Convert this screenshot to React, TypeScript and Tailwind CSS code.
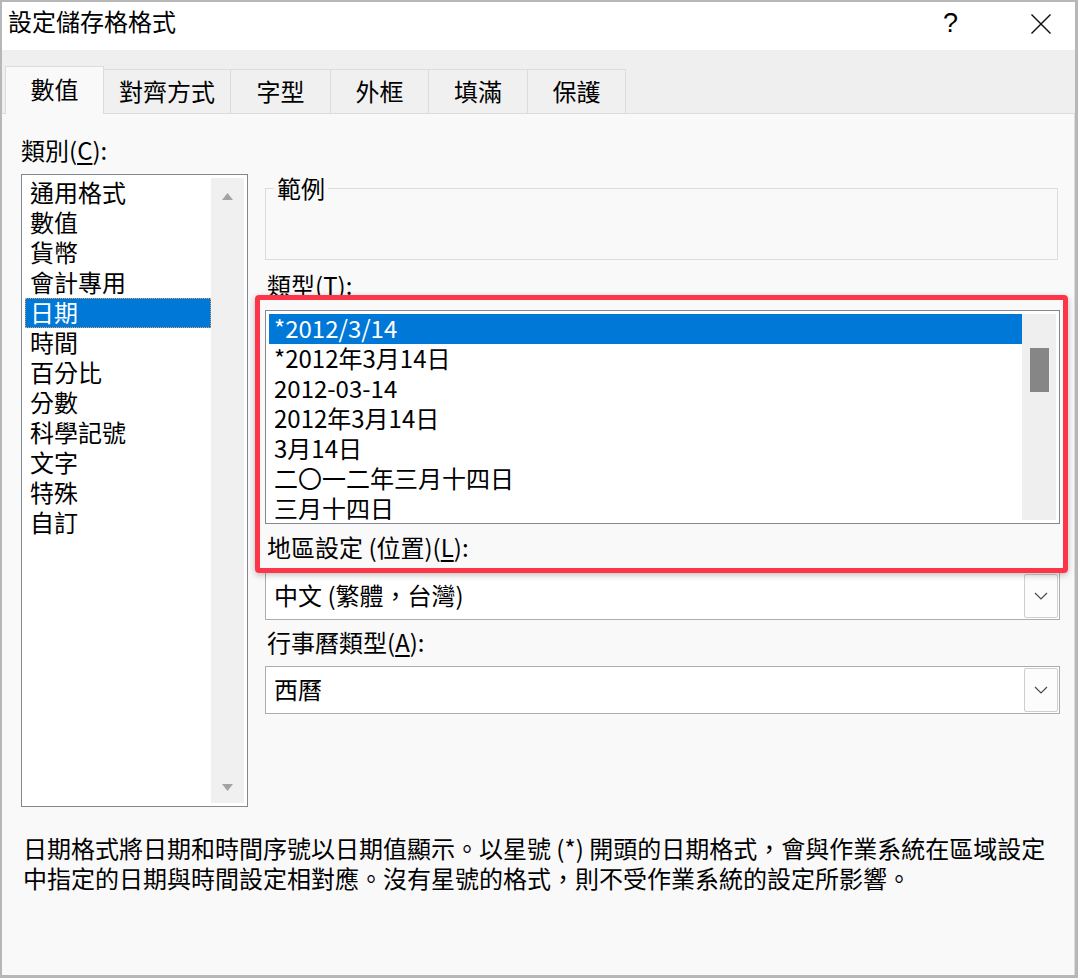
import React from 'react';

const categories = ['通用格式', '數值', '貨幣', '會計專用', '日期', '時間', '百分比', '分數', '科學記號', '文字', '特殊', '自訂'];

const types = ['*2012/3/14', '*2012年3月14日', '2012-03-14', '2012年3月14日', '3月14日', '二〇一二年三月十四日', '三月十四日'];

const tabs = [
  { label: '對齊方式', w: 'w-[127px]' },
  { label: '字型', w: 'w-[100px]' },
  { label: '外框', w: 'w-[98px]' },
  { label: '填滿', w: 'w-[99px]' },
  { label: '保護', w: 'w-[98px]' },
];

function Chevron() {
  return (
    <svg width="14" height="8" viewBox="0 0 14 8" fill="none">
      <polyline points="1,1 7,7 13,1" stroke="#4a4a4a" strokeWidth="1.2" />
    </svg>
  );
}

function Select({ value }: { value: string }) {
  return (
    <div className="h-[48px] w-[795px] border border-[#adadad] bg-white flex p-[1px]">
      <div className="flex-1 flex items-center pl-[7px] pb-[3px] text-[24px] leading-[30px]">{value}</div>
      <div className="w-[34px] border border-[#cfcfcf] rounded-[2px] bg-[#fcfcfc] flex items-center justify-center">
        <Chevron />
      </div>
    </div>
  );
}

export default function App() {
  return (
    <div className="relative w-[1078px] h-[978px] bg-[#f9f9f9] border-l-2 border-t-2 border-r-[3px] border-b-[3px] border-[#b7b7b7] flex flex-col overflow-hidden text-black font-['Noto_Sans_CJK_TC','Noto_Sans',sans-serif]">
      {/* title bar */}
      <div className="h-[48px] bg-white flex items-start pt-[4px]">
        <div className="flex-1 pl-[6px] text-[24px] leading-[30px]">設定儲存格格式</div>
        <div className="flex items-center h-[34px] mr-[24px]">
          <span className="text-[27px] leading-[30px] font-['Liberation_Sans',sans-serif]">?</span>
          <svg className="ml-[73px] mt-[2px]" width="20" height="20" viewBox="0 0 20 20">
            <line x1="0.5" y1="0.5" x2="19.5" y2="19.5" stroke="#111" strokeWidth="1.4" />
            <line x1="19.5" y1="0.5" x2="0.5" y2="19.5" stroke="#111" strokeWidth="1.4" />
          </svg>
        </div>
      </div>

      {/* tabs */}
      <div className="h-[63px] bg-[#efefef] flex items-end pl-[3px]">
        <div className="relative z-10 -mb-px w-[99px] h-[48px] bg-[#f9f9f9] border-l border-t border-r border-[#dcdcdc] flex items-center justify-center pb-[4px] text-[24px] leading-[30px]">
          數值
        </div>
        {tabs.map((t) => (
          <div
            key={t.label}
            className={`${t.w} h-[44px] bg-[#f0f0f0] border-t border-r border-[#dcdcdc] flex items-center justify-center pb-[2px] text-[24px] leading-[30px]`}
          >
            {t.label}
          </div>
        ))}
      </div>

      {/* panel */}
      <div className="flex-1 border-t border-r border-[#dcdcdc] bg-[#f9f9f9] pl-[19px]">
        <div className="flex">
          {/* categories */}
          <div className="w-[227px] pt-[21px]">
            <div className="text-[24px] leading-[30px] h-[32px]">
              類別(<span className="underline underline-offset-[3px]">C</span>):
            </div>
            <div className="mt-[7px] h-[633px] border border-[#828790] bg-white p-[3px] flex">
              <div className="w-[186px]">
                {categories.map((c, i) =>
                  i === 4 ? (
                    <div key={c} className="h-[30px] bg-[#0078d7] text-white border border-dotted border-[#e3a15f] pl-[4px] text-[24px] leading-[26px]">
                      {c}
                    </div>
                  ) : (
                    <div key={c} className="h-[30px] pl-[5px] text-[24px] leading-[27px]">
                      {c}
                    </div>
                  )
                )}
              </div>
              <div className="w-[33px] bg-[#f0f0f0] flex flex-col items-center justify-between pt-[15px] pb-[12px]">
                <svg width="11" height="7" viewBox="0 0 11 7">
                  <polygon points="5.5,0 11,7 0,7" fill="#a3a3a3" />
                </svg>
                <svg width="11" height="7" viewBox="0 0 11 7">
                  <polygon points="0,0 11,0 5.5,7" fill="#a3a3a3" />
                </svg>
              </div>
            </div>
          </div>

          {/* right side */}
          <div className="ml-[17px] w-[795px] pt-[60px]">
            <fieldset className="w-[793px] border border-[#dcdcdc] p-0 m-0">
              <legend className="ml-[8px] px-[3px] text-[24px] leading-[28px]">範例</legend>
              <div className="h-[57px]" />
            </fieldset>

            <div className="mt-[10px] pl-[2px] text-[24px] leading-[30px] h-[32px]">
              類型(<span className="underline underline-offset-[3px]">T</span>):
            </div>
            <div className="mt-[8px] h-[214px] border border-[#828790] bg-white p-[3px] flex">
              <div className="w-[753px] overflow-hidden">
                {types.map((t, i) => (
                  <div
                    key={t}
                    className={`h-[30px] pl-[5px] text-[24px] leading-[27px] whitespace-nowrap ${i === 0 ? 'bg-[#0078d7] text-white' : ''}`}
                  >
                    {t}
                  </div>
                ))}
              </div>
              <div className="w-[34px] bg-[#efefef] pl-[8px] pt-[34px]">
                <div className="w-[19px] h-[44px] bg-[#868686]" />
              </div>
            </div>

            <div className="mt-[8px] pl-[2px] text-[24px] leading-[30px] h-[32px]">
              地區設定 (位置)(<span className="underline underline-offset-[3px]">L</span>):
            </div>
            <div className="mt-[8px]">
              <Select value="中文 (繁體，台灣)" />
            </div>

            <div className="mt-[7px] pl-[2px] text-[24px] leading-[30px] h-[32px]">
              行事曆類型(<span className="underline underline-offset-[3px]">A</span>):
            </div>
            <div className="mt-[7px]">
              <Select value="西曆" />
            </div>
          </div>
        </div>

        <p className="mt-[26px] ml-[2px] text-[24px] leading-[30px] whitespace-nowrap">
          日期格式將日期和時間序號以日期值顯示。以星號 (*) 開頭的日期格式，會與作業系統在區域設定
          <br />
          中指定的日期與時間設定相對應。沒有星號的格式，則不受作業系統的設定所影響。
        </p>
      </div>

      {/* highlight annotation */}
      <div className="pointer-events-none absolute left-[253px] top-[293px] w-[813px] h-[278px] border-[5px] border-[#fe3448] rounded-[4px] shadow-[0_2px_6px_rgba(0,0,0,0.25)]" />
    </div>
  );
}
